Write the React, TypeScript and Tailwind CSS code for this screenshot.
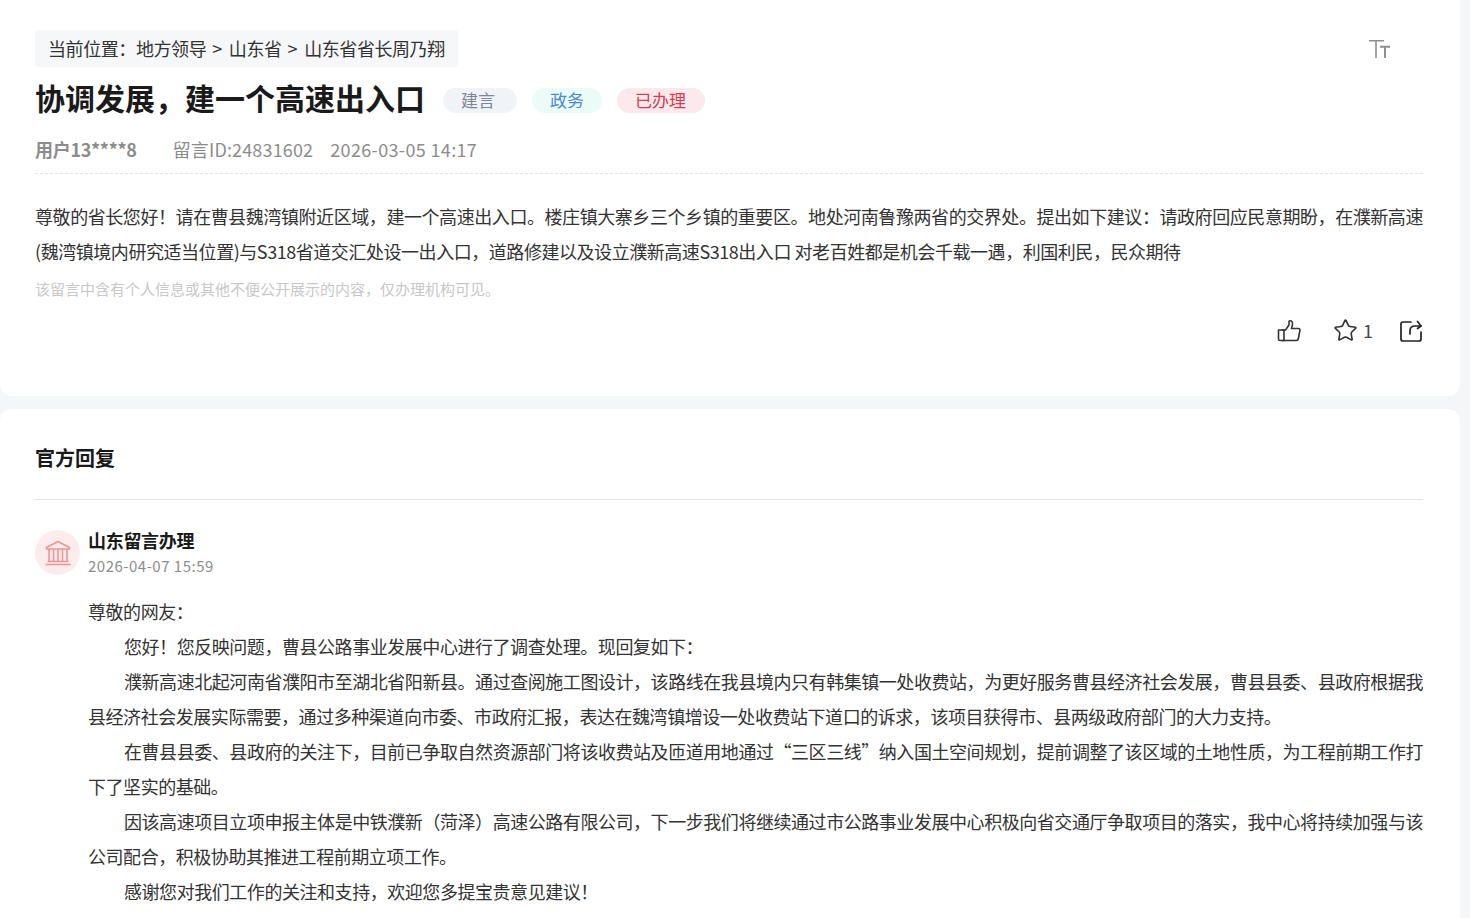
import React from 'react';
import { Star } from 'lucide-react';

const font = { fontFamily: '"Noto Sans CJK SC", "Noto Sans", sans-serif' };

const tags = [
  { label: '建言', cls: 'w-[74px] bg-[#f0f3f8] text-[#7d8799]' },
  { label: '政务', cls: 'w-[70px] bg-[#ebfbf8] text-[#4a8ad8]' },
  { label: '已办理', cls: 'w-[88px] bg-[#fbe9ec] text-[#dc3a4f]' },
];

const FontSizeIcon = () => (
  <svg width="21" height="18" viewBox="0 0 21 18" fill="none" stroke="#8f8f8f">
    <path d="M0 .8h15M7 .8V18" strokeWidth="1.6" />
    <path d="M11 6.800h10M16 6.800V18" strokeWidth="2" />
  </svg>
);

const ThumbIcon = () => (
  <svg width="24" height="24" viewBox="0 0 24 24" fill="none" stroke="#333" strokeWidth="1.6" strokeLinejoin="round">
    <path d="M1.5 11h5.5v10.5H3a1.5 1.5 0 0 1-1.5-1.5z" />
    <path d="M5 11h3.5l3.5-5V2.5c0-1 2.600-1.200 3.300.8.5 1.500 0 4.200-.8 6.200H21.500c1 0 1.600.8 1.400 1.800l-1.500 8.200c-.2 1.200-1 2-2.200 2H5" />
  </svg>
);

const ShareIcon = () => (
  <svg width="24" height="24" viewBox="0 0 24 24" fill="none" stroke="#222" strokeWidth="1.7" strokeLinecap="round" strokeLinejoin="round">
    <path d="M12 3H4a2 2 0 0 0-2 2v15a2 2 0 0 0 2 2h16a2 2 0 0 0 2-2v-7" />
    <path d="M11 15v-3c0-3 2-5 5-5h6" />
    <path d="M18.500 2.500L22 7l-3.500 2.500" />
  </svg>
);

const BankIcon = () => (
  <svg width="28" height="26" viewBox="0 0 28 26" fill="none" stroke="#f09494" strokeWidth="1.6" strokeLinejoin="round">
    <path d="M14 1.500L2.500 7.500v1.500h23V7.500z" />
    <path d="M5 9v12M9.500 9v12M14 9v12M18.500 9v12M23 9v12" />
    <path d="M3.500 21.500h21M1.500 24.500h25" />
  </svg>
);

const App = () => {
  return (
    <div style={font} className="flex h-[918px] flex-col overflow-hidden bg-[#f5f6f8] pr-[10px] text-[18px] text-[#222]">
      {/* question card */}
      <section className="h-[396px] rounded-b-xl bg-white pt-[30px] pr-[37px] pl-[35px]">
        <div className="flex items-start justify-between">
          <div className="flex h-[37px] w-[423px] items-center rounded-[3px] bg-[#f6f7f9] pl-[13px] text-[18px] tracking-[-0.42px] whitespace-nowrap text-[#333]">
            当前位置：地方领导<span className="mr-[7px] ml-[6px]">&gt;</span>山东省<span className="mr-[7px] ml-[6px]">&gt;</span>山东省省长周乃翔
          </div>
          <div className="mt-[10px] mr-[33px]">
            <FontSizeIcon />
          </div>
        </div>

        <div className="mt-[8px] flex items-center">
          <h1 className="text-[30px] leading-[44px] font-bold text-[#1a1a1a]">协调发展，建一个高速出入口</h1>
          <div className="mt-[6px] ml-[18px] flex gap-[15px]">
            {tags.map((t) => (
              <span key={t.label} className={`flex h-[25px] items-center rounded-full pl-[18px] text-[17px] ${t.cls}`}>
                {t.label}
              </span>
            ))}
          </div>
        </div>

        <div className="mt-[16px] flex h-[28px] items-center text-[18px] text-[#8c8c8c]">
          <span className="font-bold tracking-[-0.3px]">用户13****8</span>
          <span className="ml-[36px] tracking-[0.15px]">留言ID:24831602</span>
          <span className="ml-[17px] tracking-[0.35px]">2026-03-05 14:17</span>
        </div>

        <div className="mt-[10px] border-b border-dashed border-[#e3e3e3]" />

        <p className="mt-[25px] text-justify text-[18px] leading-[35px] tracking-[-0.45px] text-[#333]">
          尊敬的省长您好！请在曹县魏湾镇附近区域，建一个高速出入口。楼庄镇大寨乡三个乡镇的重要区。地处河南鲁豫两省的交界处。提出如下建议：请政府回应民意期盼，在濮新高速(魏湾镇境内研究适当位置)与S318省道交汇处设一出入口，道路修建以及设立濮新高速S318出入口 对老百姓都是机会千载一遇，利国利民，民众期待
        </p>

        <p className="mt-[9px] text-[15px] leading-[22px] text-[#c8c8c8]">该留言中含有个人信息或其他不便公开展示的内容，仅办理机构可见。</p>

        <div className="mt-[17px] flex items-center justify-end">
          <ThumbIcon />
          <Star size={25} strokeWidth={1.6} className="ml-[32px] text-[#333]" />
          <span className="ml-[5px] w-[12px] text-[18px] text-[#444]">1</span>
          <span className="ml-[24px]">
            <ShareIcon />
          </span>
        </div>
      </section>

      {/* official reply */}
      <section className="mt-[13px] flex-1 rounded-t-xl bg-white pr-[37px] pl-[35px]">
        <h2 className="flex h-[91px] items-center border-b border-[#e5e5e5] pt-[8px] text-[20px] font-bold text-[#1a1a1a]">官方回复</h2>

        <div className="mt-[30px] flex">
          <div className="flex h-[45px] w-[45px] items-center justify-center rounded-full bg-[#fdecec]">
            <BankIcon />
          </div>
          <div className="ml-[8px] -mt-[2px]">
            <div className="text-[18px] leading-[24px] font-bold tracking-[-0.3px] text-[#1a1a1a]">山东留言办理</div>
            <div className="mt-[2px] text-[15px] leading-[24px] tracking-[0.5px] text-[#8c8c8c]">2026-04-07 15:59</div>
          </div>
        </div>

        <div className="mt-[16px] ml-[53px] text-justify text-[18px] leading-[35px] tracking-[-0.45px] text-[#333]">
          <p>尊敬的网友：</p>
          <p className="indent-[36px]">您好！您反映问题，曹县公路事业发展中心进行了调查处理。现回复如下：</p>
          <p className="indent-[36px]">濮新高速北起河南省濮阳市至湖北省阳新县。通过查阅施工图设计，该路线在我县境内只有韩集镇一处收费站，为更好服务曹县经济社会发展，曹县县委、县政府根据我县经济社会发展实际需要，通过多种渠道向市委、市政府汇报，表达在魏湾镇增设一处收费站下道口的诉求，该项目获得市、县两级政府部门的大力支持。</p>
          <p className="indent-[36px]">在曹县县委、县政府的关注下，目前已争取自然资源部门将该收费站及匝道用地通过“三区三线”纳入国土空间规划，提前调整了该区域的土地性质，为工程前期工作打下了坚实的基础。</p>
          <p className="indent-[36px]">因该高速项目立项申报主体是中铁濮新（菏泽）高速公路有限公司，下一步我们将继续通过市公路事业发展中心积极向省交通厅争取项目的落实，我中心将持续加强与该公司配合，积极协助其推进工程前期立项工作。</p>
          <p className="indent-[36px]">感谢您对我们工作的关注和支持，欢迎您多提宝贵意见建议！</p>
        </div>
      </section>
    </div>
  );
};

export default App;
